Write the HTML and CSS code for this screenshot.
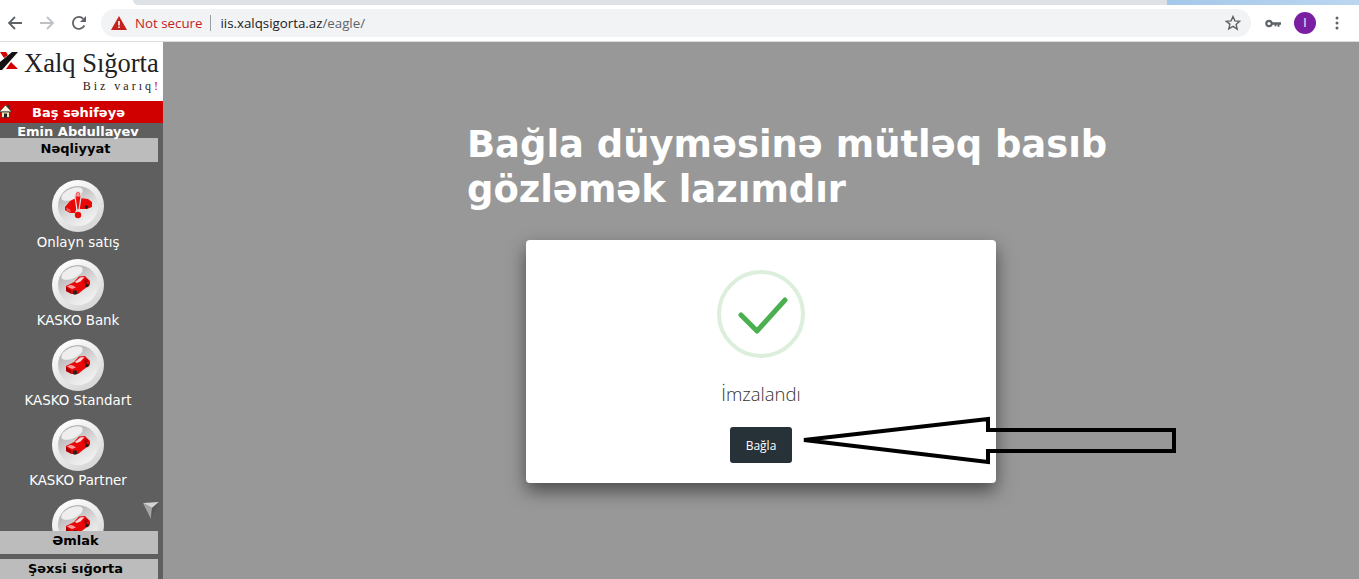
FILE: index.html
```html
<!DOCTYPE html>
<html lang="az">
<head>
  <meta charset="UTF-8" />
  <meta name="viewport" content="width=device-width, initial-scale=1.0"/>
  <title>Xalq Sığorta</title>
  <link rel="stylesheet" href="styles.css">
</head>
<body>
  <svg class="defs" width="0" height="0" aria-hidden="true">
    <defs>
      <linearGradient id="discEdge" x1="0.2" y1="0" x2="0.8" y2="1">
        <stop offset="0" stop-color="#ffffff"/>
        <stop offset="1" stop-color="#d4d4d4"/>
      </linearGradient>
      <linearGradient id="discFace" x1="0.2" y1="0" x2="0.8" y2="1">
        <stop offset="0" stop-color="#a8a8a8"/>
        <stop offset="0.55" stop-color="#dcdcdc"/>
        <stop offset="1" stop-color="#f6f6f6"/>
      </linearGradient>
      <symbol id="disc" viewBox="0 0 52 52">
        <circle cx="26" cy="26" r="26" fill="url(#discEdge)"/>
        <circle cx="26" cy="26" r="20" fill="url(#discFace)"/>
        <ellipse cx="20" cy="14" rx="11.500" ry="5.500" transform="rotate(-24 20 14)" fill="#eeeeee"/>
      </symbol>
      <symbol id="car" viewBox="0 0 52 52">
        <use href="#disc"/>
        <path d="M14 27l8-4 5-5.500 6-.5 5 5v4l-7 5-5 4h-6l-6-3z" fill="#e80808"/>
        <path d="M23 23l5-4.500 4.500-.5-4 4.500-4 1.500z" fill="#ffd6d6"/>
        <path d="M31 23.500l3-4.500 2.500 2.500-2.500 3.500z" fill="#b00000"/>
        <path d="M15 27.500l5 2.500 4-1.500-3-2-3-.5z" fill="#ff9a9a"/>
        <path d="M14 28l5 3.500.5 3.500-5.500-3z" fill="#a80000"/>
        <circle cx="23" cy="33.500" r="2.200" fill="#222"/>
        <circle cx="35" cy="26.500" r="1.800" fill="#222"/>
      </symbol>
      <symbol id="carAlert" viewBox="0 0 52 52">
        <use href="#disc"/>
        <path d="M13 27l5-6 6-3v12l-1 3h-5l-5-3z" fill="#e80808"/>
        <path d="M14 27.500l4 2 1 3-4-2z" fill="#f06060"/>
        <path d="M28 18l8 1 4 3v5l-5 2-7 0z" fill="#e80808"/>
        <circle cx="34.500" cy="27" r="1.800" fill="#222"/>
        <path d="M23 17c0-3 1.300-5.500 3-5.500s3 2.500 3 5.500l-2 13h-2z" fill="#ee1010" stroke="#e4e4e4" stroke-width="1.200"/>
        <path d="M24.700 12.500h2.600l.7 4h-4z" fill="#f49a9a"/>
        <circle cx="26" cy="35" r="3.200" fill="#e80808"/>
      </symbol>
    </defs>
  </svg>

  <header class="chrome">
    <div class="tabstrip">
      <div class="tab-gray"></div>
      <div class="wallpaper"></div>
    </div>
    <div class="toolbar">
      <svg class="nav-btn" viewBox="0 0 16 16"><path d="M15 8H2M8 2L2 8l6 6" fill="none" stroke="#5f6368" stroke-width="1.800"/></svg>
      <svg class="nav-btn" viewBox="0 0 16 16"><path d="M1 8h13M8 2l6 6-6 6" fill="none" stroke="#bdc1c6" stroke-width="1.800"/></svg>
      <svg class="nav-btn" viewBox="0 0 16 16"><path d="M13.300 10.500A6 6 0 1 1 12.300 3.800" fill="none" stroke="#5f6368" stroke-width="1.800"/><path d="M15 1v6H9z" fill="#5f6368"/></svg>
      <div class="address">
        <svg class="warn" viewBox="0 0 16 14"><path d="M8 0l8 14H0z" fill="#c5221f"/><path d="M7.200 5h1.600v4.500H7.200zM7.200 10.500h1.600v1.600H7.200z" fill="#fff"/></svg>
        <span class="not-secure">Not secure</span>
        <span class="sep"></span>
        <span class="url"><b>iis.xalqsigorta.az</b>/eagle/</span>
        <svg class="star" viewBox="0 0 16 16"><path d="M8 1.500l1.900 4.400 4.800.4-3.600 3.200 1.100 4.700L8 11.300l-4.200 2.500 1.100-4.700L1.300 6.300l4.800-.4z" fill="none" stroke="#5f6368" stroke-width="1.400"/></svg>
      </div>
      <svg class="key" viewBox="0 0 16 9"><circle cx="4" cy="4.500" r="2.700" fill="none" stroke="#5f6368" stroke-width="2.200"/><path d="M7 3.300h9v2.400h-1.500v2h-2v-2h-1v1.500H9.500V5.700H7z" fill="#5f6368"/></svg>
      <div class="avatar">I</div>
      <svg class="dots" viewBox="0 0 4 14"><circle cx="2" cy="2" r="1.500"/><circle cx="2" cy="7" r="1.500"/><circle cx="2" cy="12" r="1.500"/></svg>
    </div>
  </header>

  <div class="page">
    <aside class="sidebar">
      <div class="logo">
        <div class="logo-top">
          <svg class="logo-mark" viewBox="0 0 18 18"><path d="M0 0h6l2 3-4 3z" fill="#d40000"/><path d="M18 0h-6L0 10v8h2z" fill="#111"/><path d="M18 17H6l5-7z" fill="#d40000"/></svg>
          <span class="logo-name">Xalq Sığorta</span>
        </div>
        <div class="logo-slogan">Biz varıq<em>!</em></div>
      </div>
      <a class="home-link">
        <svg class="home-icon" viewBox="0 0 11 14"><path d="M8 1h1.500v4H8z" fill="#333"/><path d="M0 7l5.500-6L11 7v1H0z" fill="#f6f2dc" stroke="#333" stroke-width="0.800"/><path d="M1.500 8h8v5.500h-8z" fill="#efe9b8" stroke="#333" stroke-width="0.800"/><path d="M4 9.500h3v4H4z" fill="#222"/></svg>
        Baş səhifəyə
      </a>
      <div class="user-name">Emin Abdullayev</div>
      <div class="section-title">Nəqliyyat</div>
      <div class="menu">
        <div class="menu-item menu-item-first"><svg class="menu-icon"><use href="#carAlert"/></svg><span>Onlayn satış</span></div>
        <div class="menu-item"><svg class="menu-icon"><use href="#car"/></svg><span>KASKO Bank</span></div>
        <div class="menu-item"><svg class="menu-icon"><use href="#car"/></svg><span>KASKO Standart</span></div>
        <div class="menu-item"><svg class="menu-icon"><use href="#car"/></svg><span>KASKO Partner</span></div>
        <div class="menu-item"><svg class="menu-icon"><use href="#car"/></svg></div>
        <svg class="scroll-down" viewBox="0 0 16 17"><path d="M0 1l16-1-7 6z" fill="#d4d4d4"/><path d="M0 1l9 5-1 11z" fill="#a6a6a6"/><path d="M16 0L9 6 8 17z" fill="#585858"/></svg>
      </div>
      <div class="section-title section-emlak">Əmlak</div>
      <div class="section-title section-sexsi">Şəxsi sığorta</div>
    </aside>

    <main class="content">
      <h1 class="notice">Bağla düyməsinə mütləq basıb gözləmək lazımdır</h1>
      <div class="modal">
        <div class="success-ring">
          <svg class="check" viewBox="0 0 50 38"><path d="M3 18l16 16L47 3" fill="none" stroke="#4caf50" stroke-width="5" stroke-linecap="round" stroke-linejoin="round"/></svg>
        </div>
        <p class="modal-text">İmzalandı</p>
        <button class="close-btn">Bağla</button>
      </div>
    </main>
  </div>

  <svg class="arrow" viewBox="0 0 380 50" width="380" height="50"><path d="M3 24L187 3v11h186v21H187v11z" fill="none" stroke="#000" stroke-width="4"/></svg>
</body>
</html>
```

FILE: styles.css
```css
* {
  box-sizing: border-box;
}
html, body {
  height: 100%;
}
body {
  margin: 0;
  overflow: hidden;
  background: #989898;
  font-family: "DejaVu Sans", sans-serif;
}
.defs {
  position: absolute;
}

/* browser bar */
.chrome {
  height: 42px;
  background: #fff;
  border-bottom: 1px solid #dadce0;
}
.tabstrip {
  height: 5px;
  display: flex;
  justify-content: flex-end;
}
.tab-gray {
  width: 1034px;
  background: #dee1e6;
  border-bottom-left-radius: 6px;
}
.wallpaper {
  width: 192px;
  background: linear-gradient(90deg, #a4c8ea, #bcd6f0);
}
.toolbar {
  height: 36px;
  display: flex;
  align-items: flex-start;
  padding: 4px 0 0 7px;
}
.nav-btn {
  width: 16px;
  height: 16px;
  margin: 6px 16px 0 0;
}
.address {
  width: 1150px;
  height: 28px;
  margin-left: -2px;
  padding: 0 10px;
  background: #f1f3f4;
  border-radius: 14px;
  display: flex;
  align-items: center;
  font-family: "Open Sans", sans-serif;
  font-size: 13.300px;
}
.warn {
  width: 16px;
  height: 14px;
  flex: none;
}
.not-secure {
  margin-left: 8px;
  color: #c5221f;
}
.sep {
  width: 1px;
  height: 16px;
  margin: 0 9px 0 8px;
  background: #9aa0a6;
}
.url {
  color: #5f6368;
}
.url b {
  font-weight: 400;
  color: #202124;
}
.star {
  width: 16px;
  height: 16px;
  margin-left: auto;
}
.key {
  width: 16px;
  height: 9px;
  margin: 10px 0 0 14px;
}
.avatar {
  width: 22px;
  height: 22px;
  margin: 3px 0 0 13px;
  border-radius: 50%;
  background: #7b1fa2;
  color: #fff;
  font-family: "Open Sans", sans-serif;
  font-size: 12px;
  line-height: 22px;
  text-align: center;
}
.dots {
  width: 4px;
  height: 14px;
  margin: 7px 0 0 19px;
  fill: #5f6368;
}

/* page */
.page {
  height: 537px;
  display: flex;
}
.sidebar {
  width: 163px;
  height: 537px;
  flex: none;
  background: #5f5f5f;
  overflow: hidden;
}
.logo {
  height: 59px;
  background: #fff;
  font-family: "Liberation Serif", serif;
  color: #222;
}
.logo-top {
  display: flex;
  align-items: flex-start;
  height: 37px;
  padding-top: 9px;
}
.logo-mark {
  width: 18px;
  height: 18px;
  margin-top: 1px;
}
.logo-name {
  margin-left: 6px;
  font-size: 26.500px;
  line-height: 24px;
  white-space: nowrap;
}
.logo-slogan {
  padding-right: 2px;
  text-align: right;
  font-size: 12px;
  line-height: 14px;
  letter-spacing: 3px;
}
.logo-slogan em {
  font-style: normal;
  color: #d40000;
}
.home-link {
  height: 22px;
  padding-left: 32px;
  position: relative;
  display: block;
  background: #d00000;
  color: #fff;
  font-size: 13px;
  font-weight: 700;
  line-height: 24px;
}
.home-icon {
  position: absolute;
  left: 0;
  top: 3px;
  width: 11px;
  height: 14px;
}
.user-name {
  height: 15px;
  width: 156px;
  color: #fff;
  font-size: 13px;
  font-weight: 700;
  line-height: 17px;
  text-align: center;
}
.section-title {
  width: 158px;
  height: 24px;
  background: #bcbcbc;
  color: #000;
  font-size: 13px;
  font-weight: 700;
  line-height: 21px;
  text-align: center;
  padding-right: 7px;
}
.menu {
  height: 369px;
  position: relative;
  overflow: hidden;
  padding-top: 17px;
}
.menu-item {
  height: 80px;
  width: 156px;
  display: flex;
  flex-direction: column;
  align-items: center;
  color: #fff;
  font-size: 13.400px;
  line-height: 16px;
}
.menu-item-first {
  padding-top: 1px;
}
.menu-item-first .menu-icon {
  margin-bottom: 3px;
}
.menu-icon {
  width: 52px;
  height: 52px;
  flex: none;
  margin-bottom: 2px;
}
.scroll-down {
  position: absolute;
  left: 143px;
  top: 340px;
  width: 16px;
  height: 17px;
}
.section-emlak {
  height: 23px;
  line-height: 19px;
}
.section-sexsi {
  height: 20px;
  margin-top: 5px;
  line-height: 19px;
}

/* content */
.content {
  flex: 1;
  min-width: 0;
  padding: 0 0 0 304px;
}
.notice {
  width: 680px;
  margin: 80px 0 0;
  color: #fff;
  font-size: 36.900px;
  font-weight: 700;
  line-height: 45px;
}
.modal {
  width: 470px;
  height: 243px;
  margin: 28px 0 0 59px;
  padding-top: 30px;
  background: #fff;
  border-radius: 4px;
  box-shadow: 0 8px 18px rgba(0,0,0,0.5);
  display: flex;
  flex-direction: column;
  align-items: center;
  font-family: "Open Sans", sans-serif;
}
.success-ring {
  width: 88px;
  height: 88px;
  border: 4px solid rgba(76,175,80,0.2);
  border-radius: 50%;
  display: flex;
  align-items: center;
  justify-content: center;
}
.check {
  width: 50px;
  height: 38px;
  margin: 3px 0 0 3px;
}
.modal-text {
  margin: 24px 0 0;
  color: #333;
  font-size: 18.500px;
  font-weight: 300;
  line-height: 24px;
}
.close-btn {
  width: 62px;
  height: 36px;
  margin-top: 21px;
  padding: 0;
  border: none;
  border-radius: 3px;
  background: #263238;
  color: #fff;
  font-family: "Open Sans", sans-serif;
  font-size: 12px;
  font-weight: 500;
  cursor: pointer;
}

/* hand drawn arrow over the screenshot */
.arrow {
  position: absolute;
  left: 801px;
  top: 416px;
}
```
